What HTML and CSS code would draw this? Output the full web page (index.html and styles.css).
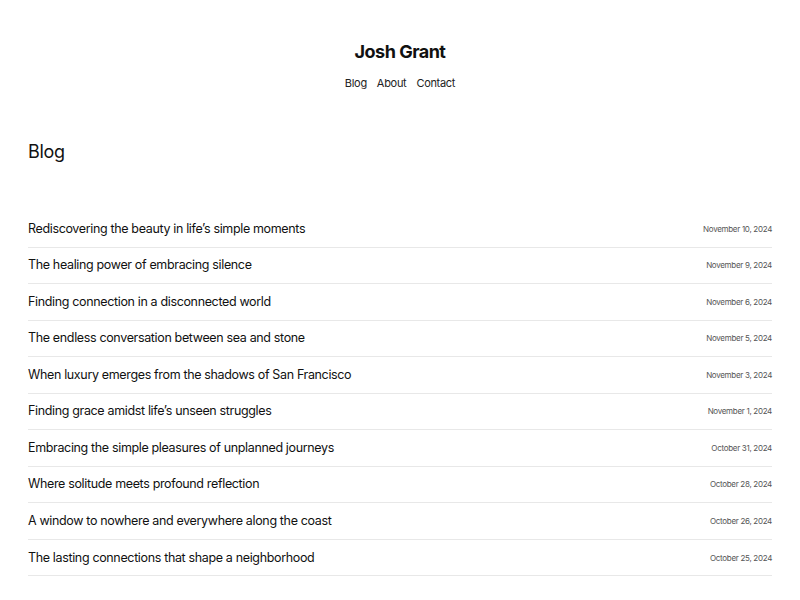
FILE: index.html
```html
<!DOCTYPE html>
<html lang="en">
<head>
<meta charset="utf-8">
<title>Josh Grant</title>
<link rel="stylesheet" href="styles.css">
</head>
<body>
<header class="site-header">
  <div class="site-title">Josh Grant</div>
  <nav class="site-nav">
    <a href="#">Blog</a>
    <a href="#">About</a>
    <a href="#">Contact</a>
  </nav>
</header>
<main class="content">
  <h1 class="page-title">Blog</h1>
  <ul class="post-list">
    <li class="post"><a class="post-title" href="#">Rediscovering the beauty in life’s simple moments</a><span class="post-date">November 10, 2024</span></li>
    <li class="post"><a class="post-title" href="#">The healing power of embracing silence</a><span class="post-date">November 9, 2024</span></li>
    <li class="post"><a class="post-title" href="#">Finding connection in a disconnected world</a><span class="post-date">November 6, 2024</span></li>
    <li class="post"><a class="post-title" href="#">The endless conversation between sea and stone</a><span class="post-date">November 5, 2024</span></li>
    <li class="post"><a class="post-title" href="#">When luxury emerges from the shadows of San Francisco</a><span class="post-date">November 3, 2024</span></li>
    <li class="post"><a class="post-title" href="#">Finding grace amidst life’s unseen struggles</a><span class="post-date">November 1, 2024</span></li>
    <li class="post"><a class="post-title" href="#">Embracing the simple pleasures of unplanned journeys</a><span class="post-date">October 31, 2024</span></li>
    <li class="post"><a class="post-title" href="#">Where solitude meets profound reflection</a><span class="post-date">October 28, 2024</span></li>
    <li class="post"><a class="post-title" href="#">A window to nowhere and everywhere along the coast</a><span class="post-date">October 26, 2024</span></li>
    <li class="post"><a class="post-title" href="#">The lasting connections that shape a neighborhood</a><span class="post-date">October 25, 2024</span></li>
  </ul>
</main>
</body>
</html>
```
FILE: styles.css
```css
* { box-sizing: border-box; }
html, body { margin: 0; padding: 0; background: #fff; }
body {
  font-family: Inter, "Noto Sans", "Liberation Sans", sans-serif;
  color: #111;
}
.site-header {
  display: flex;
  flex-direction: column;
  align-items: center;
  padding-top: 40px;
}
.site-title {
  font-size: 18px;
  font-weight: 700;
  letter-spacing: -0.5px;
  line-height: 24px;
  color: #111;
}
.site-nav {
  display: flex;
  gap: 10px;
  margin-top: 12px;
}
.site-nav a {
  font-size: 11px;
  line-height: 14px;
  color: #222;
  text-decoration: none;
  letter-spacing: -0.3px;
}
.content {
  padding: 0 28px;
}
.page-title {
  margin: 50px 0 0;
  font-size: 18px;
  font-weight: 400;
  line-height: 24px;
  letter-spacing: -0.3px;
  color: #111;
}
.post-list {
  list-style: none;
  margin: 47px 0 0;
  padding: 0;
}
.post {
  display: flex;
  justify-content: space-between;
  align-items: center;
  padding: 9.78px 0;
  border-bottom: 1px solid #e8e8e8;
}
.post-title {
  font-size: 12.5px;
  line-height: 16px;
  color: #111;
  text-decoration: none;
  letter-spacing: -0.35px;
}
.post-date {
  font-size: 8px;
  line-height: 16px;
  color: #555;
  letter-spacing: -0.3px;
}
```
